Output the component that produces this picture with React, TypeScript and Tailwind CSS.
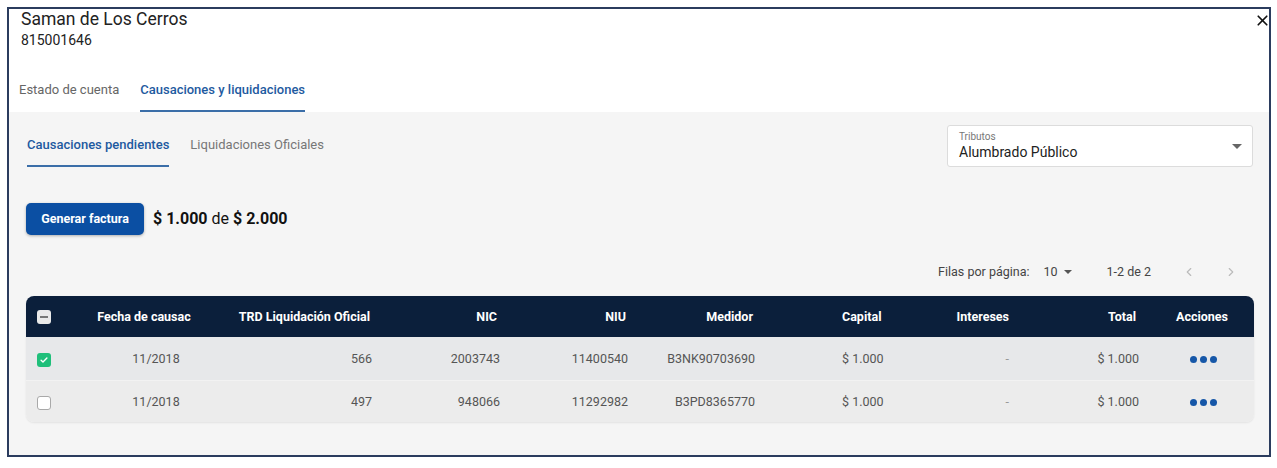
import { ChevronLeft, ChevronRight, X } from "lucide-react"

interface Row {
  checked: boolean
  fecha: string
  trd: string
  nic: string
  niu: string
  medidor: string
  capital: string
  intereses: string
  total: string
}

const rows: Row[] = [
  {
    checked: true,
    fecha: "11/2018",
    trd: "566",
    nic: "2003743",
    niu: "11400540",
    medidor: "B3NK90703690",
    capital: "$ 1.000",
    intereses: "-",
    total: "$ 1.000",
  },
  {
    checked: false,
    fecha: "11/2018",
    trd: "497",
    nic: "948066",
    niu: "11292982",
    medidor: "B3PD8365770",
    capital: "$ 1.000",
    intereses: "-",
    total: "$ 1.000",
  },
]

const cols =
  "grid grid-cols-[44px_155px_157px_128px_128px_127px_155px_99px_130px_105px] items-center"

function Dots() {
  return (
    <div className="flex items-center justify-center gap-[3px] pl-[3px]">
      <span className="size-[7px] rounded-full bg-[#1657a8]" />
      <span className="size-[7px] rounded-full bg-[#1657a8]" />
      <span className="size-[7px] rounded-full bg-[#1657a8]" />
    </div>
  )
}

function Checkbox({ checked }: { checked: boolean }) {
  if (checked) {
    return (
      <div className="size-[14px] rounded-[3px] bg-[#1fbf7a] flex items-center justify-center">
        <svg viewBox="0 0 12 12" className="size-[10px]">
          <path d="M2.5 6.2l2.3 2.3 4.7-4.9" fill="none" stroke="white" strokeWidth="1.6" strokeLinecap="round" strokeLinejoin="round" />
        </svg>
      </div>
    )
  }
  return <div className="size-[14px] rounded-[3px] border border-[#a9a9a9] bg-white" />
}

export default function App() {
  return (
    <div className="w-[1277px] h-[468px] bg-white pt-[7px] pl-[7px] font-['Roboto',sans-serif]">
      <div className="relative w-[1264px] h-[450px] border-2 border-[#2b3c5e] flex flex-col bg-white">
        <button className="absolute right-[-2px] top-[3px] text-[#111]">
          <X className="size-[17px]" strokeWidth={2.4} />
        </button>

        {/* ── Encabezado ── */}
        <div className="pl-3 pt-[1px]">
          <h1 className="text-[17.5px] leading-[18px] text-[#222]">Saman de Los Cerros</h1>
          <p className="text-[14px] leading-[18px] text-[#222] mt-[3px]">815001646</p>
        </div>

        <div className="flex pl-[10px] mt-[21px] gap-[21px] text-[13px]">
          <div className="h-[42px] pb-[2px] flex items-center text-[#666]">Estado de cuenta</div>
          <div className="h-[42px] flex items-center font-medium text-[#1e5aa0] border-b-2 border-[#3b6ea8]">
            Causaciones y liquidaciones
          </div>
        </div>

        {/* ── Contenido ── */}
        <div className="flex-1 bg-[#f5f5f5] pl-[17px] pr-[15px]">
          <div className="flex justify-between items-start mt-[13px]">
            <div className="flex gap-[21px] pl-[1px] text-[13px]">
              <div className="h-[42px] flex items-center font-medium text-[#1e5aa0] border-b-2 border-[#3b6ea8]">
                Causaciones pendientes
              </div>
              <div className="h-[42px] pb-[2px] flex items-center text-[#777]">Liquidaciones Oficiales</div>
            </div>
            <div className="w-[306px] h-[42px] mr-[1px] bg-white border border-[#dcdcdc] rounded-[3px] flex items-center justify-between pl-[11px] pr-[10px]">
              <div className="flex flex-col">
                <span className="text-[10px] leading-[12px] text-[#777]">Tributos</span>
                <span className="text-[14px] leading-[18px] text-[#222]">Alumbrado Público</span>
              </div>
              <svg viewBox="0 0 10 5" className="w-[10px] h-[5px]">
                <path d="M0 0h10L5 5z" fill="#666" />
              </svg>
            </div>
          </div>

          <div className="flex items-center gap-[9px] mt-[36px]">
            <button className="h-[32px] w-[118px] rounded-[5px] bg-[#0b4fa3] text-white text-[12.5px] font-bold shadow-[0_1px_3px_rgba(0,0,0,0.3)]">
              Generar factura
            </button>
            <span className="text-[16px] text-[#111]">
              <b className="font-bold">$ 1.000</b> de <b className="font-bold">$ 2.000</b>
            </span>
          </div>

          <div className="flex justify-end items-center h-[24px] mt-[25px] text-[12.5px] text-[#444]">
            <span>Filas por página:</span>
            <span className="ml-[14px]">10</span>
            <svg viewBox="0 0 10 5" className="w-[8px] h-[4px] ml-[6px]">
              <path d="M0 0h10L5 5z" fill="#555" />
            </svg>
            <span className="ml-[35px]">1-2 de 2</span>
            <ChevronLeft className="size-[14px] ml-[31px] text-[#bbb]" />
            <ChevronRight className="size-[14px] ml-[28px] mr-[16px] text-[#bbb]" />
          </div>

          {/* ── Tabla ── */}
          <div className="mt-[12px] w-[1228px] rounded-lg shadow-[0_1px_2px_rgba(0,0,0,0.08)] overflow-hidden">
            <div className={`${cols} h-[41px] pt-[1px] bg-[#0b1f3b] text-white text-[12.5px] font-bold`}>
              <div className="pl-[11px]">
                <div className="size-[14px] rounded-[3px] bg-[#e9e9e9] flex items-center justify-center">
                  <span className="w-[8px] h-[2px] bg-[#777]" />
                </div>
              </div>
              <div className="text-center pr-[7px]">Fecha de causac</div>
              <div className="text-right pr-[12px]">TRD Liquidación Oficial</div>
              <div className="text-right pr-[13px]">NIC</div>
              <div className="text-right pr-[12px]">NIU</div>
              <div className="text-right pr-[12px]">Medidor</div>
              <div className="pl-[77px]">Capital</div>
              <div className="text-right pr-[10px]">Intereses</div>
              <div className="text-right pr-[13px]">Total</div>
              <div className="text-center pl-[1px]">Acciones</div>
            </div>
            {rows.map((r, i) => (
              <div
                key={i}
                className={`${cols} pt-[2px] text-[12.5px] text-[#555] ${
                  i === 0 ? "h-[43px] bg-[#e7e8ea]" : "h-[42px] bg-[#ececec] border-t border-[#f2f2f2]"
                }`}
              >
                <div className="pl-[11px]">
                  <Checkbox checked={r.checked} />
                </div>
                <div className="text-center pl-[17px]">{r.fecha}</div>
                <div className="text-right pr-[10px]">{r.trd}</div>
                <div className="text-right pr-[10px]">{r.nic}</div>
                <div className="text-right pr-[10px]">{r.niu}</div>
                <div className="text-right pr-[10px]">{r.medidor}</div>
                <div className="pl-[77px]">{r.capital}</div>
                <div className="text-right pr-[10px] text-[#999]">{r.intereses}</div>
                <div className="text-right pr-[10px]">{r.total}</div>
                <Dots />
              </div>
            ))}
          </div>
        </div>
      </div>
    </div>
  )
}
